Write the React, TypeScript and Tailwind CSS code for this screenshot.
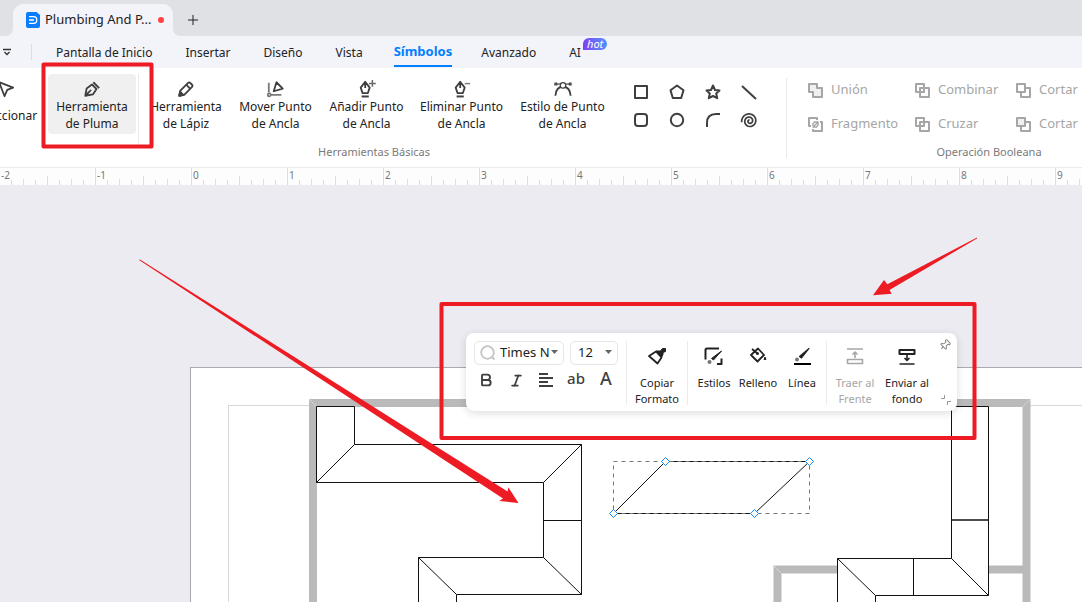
import type { ReactNode } from "react";
import { Bold, Italic, Pin, Plus } from "lucide-react";

interface Tool {
  label: string;
  width: string;
  icon: ReactNode;
  active?: boolean;
}

const menuItems = [
  "Pantalla de Inicio",
  "Insertar",
  "Diseño",
  "Vista",
  "Símbolos",
  "Avanzado",
];

const rulerUnits = Array.from({ length: 24 }, (_, i) => i - 2);

// Clockwise spiral winding inwards from the left
const spiralPoints = Array.from({ length: 49 }, (_, i) => {
  const angle = Math.PI * (0.95 + (i / 48) * 4.6);
  const radius = 8 * (1 - i / 52);
  return `${(10.5 + radius * Math.cos(angle)).toFixed(2)},${(11 + radius * Math.sin(angle)).toFixed(2)}`;
}).join(" ");

function Icon({ children, className = "size-5" }: { children: ReactNode; className?: string }) {
  return (
    <svg
      className={className}
      viewBox="0 0 20 20"
      fill="none"
      stroke="currentColor"
      strokeWidth={2}
      strokeLinejoin="round"
      aria-hidden="true"
    >
      {children}
    </svg>
  );
}

const tools: Tool[] = [
  {
    label: "Seleccionar",
    width: "w-[86px]",
    icon: <path d="M3.500 2.500L19 8.500L12.500 11L9.500 18Z" />,
  },
  {
    label: "Herramienta\nde Pluma",
    width: "w-[88px]",
    active: true,
    icon: (
      <>
        <path d="M2.500 17.500L4 9.500L10 5L15 10L11 16L2.500 17.500L8 12" />
        <path d="M11.500 2.500L18 9" />
        <circle cx="8.500" cy="11.500" r="1" fill="currentColor" stroke="none" />
      </>
    ),
  },
  {
    label: "Herramienta\nde Lápiz",
    width: "w-[88px]",
    icon: (
      <>
        <path d="M2.500 17.500L3.500 12L12 3.500Q13.500 2 15 3.500L16.500 5Q18 6.500 16.500 8L8 16.500Z" />
        <path d="M10.500 5.500L14.500 9.500" />
        <path d="M2.500 17.500L3.500 13L7 16.500Z" fill="currentColor" />
      </>
    ),
  },
  {
    label: "Mover Punto\nde Ancla",
    width: "w-[91px]",
    icon: (
      <>
        <path d="M2 3V14M4 16.500H16" stroke="#7a7a7a" />
        <circle cx="2.500" cy="16.500" r="1.700" stroke="#7a7a7a" />
        <path d="M10.500 2.500L17.500 9.500L7.500 12.500Z" />
      </>
    ),
  },
  {
    label: "Añadir Punto\nde Ancla",
    width: "w-[91px]",
    icon: (
      <>
        <path d="M8 2L3 8.500L5 14.500H11L13 8.500ZM8 3V9" />
        <path d="M4 18.300H12" strokeWidth="2.200" />
        <path d="M16 0V7.500M12.200 4H19.800" stroke="#6b6b6b" strokeWidth="1.700" />
      </>
    ),
  },
  {
    label: "Eliminar Punto\nde Ancla",
    width: "w-[99px]",
    icon: (
      <>
        <path d="M8 2L3 8.500L5 14.500H11L13 8.500ZM8 3V9" />
        <path d="M4 18.300H12" strokeWidth="2.200" />
        <path d="M13 4H19" stroke="#7f7f7f" strokeWidth="1.700" />
      </>
    ),
  },
  {
    label: "Estilo de Punto\nde Ancla",
    width: "w-[103px]",
    icon: (
      <>
        <path d="M1.500 17.500C2 11 5 7.500 10 7.500S18 11 18.500 17.500" />
        <path d="M3 4.500H17" strokeWidth="1.300" />
        <circle cx="10" cy="6" r="3" fill="white" strokeWidth="1.300" />
        <path d="M1 3.500H3V5.500H1ZM17 3.500H19V5.500H17Z" fill="white" strokeWidth="1.300" />
      </>
    ),
  },
];

const shapes = [
  { name: "Rectángulo", icon: <rect x="4" y="4" width="12" height="12" /> },
  { name: "Pentágono", icon: <path d="M10 3.500L16.500 8.300L14.200 16H5.800L3.500 8.300Z" /> },
  {
    name: "Estrella",
    icon: <path d="M10 3.500L12 8L16.500 8.500L13.200 11.500L14.200 16.200L10 14L5.800 16.200L6.800 11.500L3.500 8.500L8 8Z" />,
  },
  { name: "Recta", icon: <path d="M3 4L17 17" /> },
  { name: "Rectángulo redondeado", icon: <rect x="4" y="4" width="12" height="12" rx="3" /> },
  { name: "Elipse", icon: <circle cx="10" cy="10" r="6.200" /> },
  { name: "Arco", icon: <path d="M4 17V13Q4 4 13 4H17" /> },
  { name: "Espiral", icon: <polyline points={spiralPoints} strokeWidth="1.700" /> },
];

const booleanOps = [
  { label: "Unión", icon: <path d="M4 4H12V8H17V17H8V12H4Z" fill="#f0f0f0" /> },
  { label: "Combinar", icon: <path d="M4 4H12V12H4ZM8 8H17V17H8Z" /> },
  {
    label: "Cortar Forma",
    icon: (
      <>
        <path d="M4 4H12V12H4Z" />
        <path d="M12 8H17V17H8V12" />
      </>
    ),
  },
  {
    label: "Fragmento",
    icon: (
      <>
        <path d="M6 12H4V4H12V6M15 8H17V17H8V15" />
        <path d="M8 12V9.500L9.500 8H13V11L11.500 13H8L13 8" strokeWidth="1.400" />
      </>
    ),
  },
  { label: "Cruzar", icon: <path d="M4 4H12V12H4ZM8 8H17V17H8Z" /> },
  {
    label: "Cortar Fondo",
    icon: (
      <>
        <path d="M4 4H12V12H4Z" fill="#f0f0f0" />
        <path d="M12 8H17V17H8V12" />
      </>
    ),
  },
];

function TitleBar() {
  return (
    <header className="flex h-9 items-end bg-[#e0e1e5] pl-[13px] text-[13px]">
      <div className="relative flex h-8 w-40 items-center rounded-t-[10px] bg-[#f3f3fa] pl-[13px]">
        <svg className="absolute bottom-0 -left-2 size-2" viewBox="0 0 8 8" aria-hidden="true">
          <path d="M8 0V8H0Q8 8 8 0Z" fill="#f3f3fa" />
        </svg>
        <svg className="absolute -right-2 bottom-0 size-2" viewBox="0 0 8 8" aria-hidden="true">
          <path d="M0 0V8H8Q0 8 0 0Z" fill="#f3f3fa" />
        </svg>
        <svg className="h-4 w-3.5" viewBox="0 0 14 16" fill="none" aria-hidden="true">
          <path d="M2 0H10.500L14 3V14Q14 16 12 16H2Q0 16 0 14V2Q0 0 2 0Z" fill="#0b7cff" />
          <path d="M3 4.700H7.500A3.300 3.300 0 0 1 7.500 11.300H3M3 8H8" stroke="white" strokeWidth="1.300" />
        </svg>
        <span className="ml-[5px] w-[105px] whitespace-nowrap">Plumbing And P...</span>
        <span className="ml-2 size-1.5 rounded-full bg-[#ff4343]" />
      </div>
      <button className="mb-2 ml-3 text-[#222]" aria-label="Nueva pestaña">
        <Plus className="size-4" strokeWidth={1.5} />
      </button>
    </header>
  );
}

function MenuBar() {
  return (
    <nav className="flex h-8 items-center bg-[#f3f3fa]">
      <button className="flex w-[31px] pl-0.5" aria-label="Más opciones">
        <svg className="h-2 w-2.5" viewBox="0 0 10 8" fill="none" stroke="#333" aria-hidden="true">
          <path d="M1 1.500H9M2.500 4L5 6.500L7.500 4" strokeWidth="1.300" />
        </svg>
      </button>
      <span className="h-4 w-px bg-[#dcdde3]" />
      <ul className="ml-6 flex h-full gap-[33px]">
        {menuItems.map((item) => (
          <li key={item} className="flex">
            <a
              href="#"
              className={
                item === "Símbolos"
                  ? "-mr-1 -ml-0.5 mb-px flex items-center border-b-2 border-[#0080ff] pt-[3px] text-[13px] font-bold whitespace-nowrap text-[#0080ff]"
                  : "flex items-center pt-0.5 whitespace-nowrap"
              }
            >
              {item}
            </a>
          </li>
        ))}
        <li className="relative flex">
          <a href="#" className="flex items-center pt-0.5">
            AI
          </a>
          <span className="absolute top-0.5 left-3.5 flex h-3 w-6 items-center justify-center rounded-[6px] rounded-bl-none bg-linear-to-r from-[#7b3ff5] to-[#4a90ff] pb-px text-[11px] leading-3 text-white italic">
            hot
          </span>
        </li>
      </ul>
    </nav>
  );
}

function Ribbon() {
  return (
    <section className="flex h-[100px] overflow-hidden border-b border-[#ebebee] bg-white">
      <div className="-ml-[38px] flex w-[824px] shrink-0 flex-col pt-1.5">
        <div className="flex h-[68px]">
          {tools.map((tool) => (
            <div key={tool.label} className="flex shrink-0">
              <button
                className={`flex h-[60px] flex-col items-center rounded pt-1.5 leading-[17px] ${tool.width} ${
                  tool.active ? "bg-[#f0f0f0]" : ""
                }`}
              >
                <span className="h-[18px] text-[#3f3f3f]">
                  <Icon className="size-[18px]">{tool.icon}</Icon>
                </span>
                <span className="flex h-[34px] items-center justify-center whitespace-pre">{tool.label}</span>
              </button>
              {tool.active && <span className="mr-[3px] ml-0.5 h-[72px] w-px bg-[#ebebeb]" />}
            </div>
          ))}
          <div className="ml-[17px] grid grid-cols-4 gap-x-4 gap-y-2 self-start pt-2 text-[#3f3f3f]">
            {shapes.map((shape) => (
              <button key={shape.name} className="size-5" aria-label={shape.name}>
                <Icon>{shape.icon}</Icon>
              </button>
            ))}
          </div>
        </div>
        <p className="text-center text-[11px] leading-5 text-[#7a7a7a]">Herramientas Básicas</p>
      </div>
      <span className="mt-2.5 h-20 w-px shrink-0 bg-[#ebebeb]" />
      <div className="flex w-[404px] shrink-0 flex-col pt-1.5">
        <div className="grid h-[68px] grid-cols-[107px_101px_150px] content-start gap-y-3.5 pt-1.5 pl-[18px]">
          {booleanOps.map((op) => (
            <button key={op.label} className="flex h-5 items-center gap-1.5 text-[13px] whitespace-nowrap text-[#a6a6a6]">
              <Icon>{op.icon}</Icon>
              {op.label}
            </button>
          ))}
        </div>
        <p className="text-center text-[11px] leading-5 text-[#7a7a7a]">Operación Booleana</p>
      </div>
    </section>
  );
}

function Ruler() {
  return (
    <div className="-ml-px flex h-[17px] overflow-hidden bg-[#fdfdfd]">
      {rulerUnits.map((unit) => (
        <div key={unit} className="flex w-24 shrink-0 border-l border-[#dedede] text-[10px] leading-[15px] text-[#777]">
          <span className="w-0 pl-px">{unit}</span>
          <svg className="-ml-px h-[17px] w-[95px] shrink-0" stroke="#dedede" aria-hidden="true">
            <path d="M11.500 12V17M23.500 11V17M35.500 12V17M47.500 8V17M59.500 12V17M71.500 11V17M83.500 12V17" />
          </svg>
        </div>
      ))}
    </div>
  );
}

function Drawing() {
  const anchors = [
    [665.5, 276.5],
    [613.5, 328.5],
    [809.5, 276.5],
    [754.5, 328.5],
  ];
  return (
    <svg className="absolute inset-0 size-full" fill="none" aria-label="Plano de planta">
      <rect x="190.500" y="182.500" width="3000" height="3000" fill="white" stroke="#a9a9ae" />
      <rect x="228.500" y="220.500" width="2924" height="2924" stroke="#d9d9d9" />
      <path d="M313 900V218H1026.500V900M777.500 900V384.500H1026.500" stroke="#bababa" strokeWidth="8" />
      <path d="M309 214L317 222M1030.500 214L1022.500 222M773.500 380.500L781.500 388.500" stroke="#d5d5d5" />
      <g stroke="#111" fill="white">
        <path d="M316.500 221.500H354.500V259.500H581.500V409.500H456.500V900H418.500V372.500H543.500V297.500H316.500Z" />
        <path d="M354.500 259.500L316.500 297.500M581.500 259.500L543.500 297.500M543.500 335.500H581.500M543.500 372.500L581.500 409.500M418.500 372.500L456.500 409.500" />
        <path d="M951.500 221.500H988.500V410.500H875.500V900H837.500V373.500H951.500Z" />
        <path d="M951.500 335H988.500" strokeWidth="1.500" />
        <path d="M951.500 373.500L988.500 410.500M913.500 373.500V410.500M837.500 373.500L875.500 410.500" />
      </g>
      <path d="M613.500 328.500L665.500 276.500H809.500L754.500 328.500Z" stroke="#111" />
      <rect x="613.500" y="276.500" width="196" height="52" stroke="#777" strokeDasharray="4 4" />
      {anchors.map(([x, y], i) => (
        <path
          key={i}
          transform={`translate(${x} ${y})`}
          d="M0 -4L4 0L0 4L-4 0Z"
          fill="white"
          stroke="#1a8cff"
        />
      ))}
    </svg>
  );
}

function Caret() {
  return (
    <svg className="pointer-events-none absolute top-2 right-[5px] h-1 w-[7px]" viewBox="0 0 7 4" aria-hidden="true">
      <path d="M0 0H7L3.500 4Z" fill="#666" />
    </svg>
  );
}

function PanelButton({ label, icon, className }: { label: string; icon: ReactNode; className: string }) {
  return (
    <button className={`flex flex-col items-center text-[11px] leading-4 ${className}`}>
      <span className="flex h-[30px] items-center">
        <Icon>{icon}</Icon>
      </span>
      <span className="mt-1 whitespace-pre">{label}</span>
    </button>
  );
}

function FloatingToolbar() {
  return (
    <div className="absolute top-[148px] left-[466px] flex h-[78px] w-[491px] rounded-lg bg-white pt-2 pl-2 shadow-[0_2px_8px_rgba(0,0,0,0.14)]">
      <div className="w-[152px]">
        <div className="flex gap-1.5">
          <label className="relative flex h-6 w-[90px] items-center rounded-[5px] border border-[#e6e6e6] pl-1">
            <svg className="size-[18px] shrink-0" viewBox="0 0 18 18" fill="none" stroke="#c4c4c4" strokeWidth="1.800">
              <circle cx="8.500" cy="8.500" r="6.300" />
              <path d="M12.500 12.500L15.500 15.500" />
            </svg>
            <select className="ml-[3px] w-[49px] appearance-none overflow-hidden text-[13px] outline-none" aria-label="Fuente">
              <option>Times New Roman</option>
            </select>
            <Caret />
          </label>
          <label className="relative flex h-6 w-12 items-center rounded-[5px] border border-[#e6e6e6] pl-[7px]">
            <select className="w-6 appearance-none text-[13px] outline-none" aria-label="Tamaño de fuente">
              <option>12</option>
            </select>
            <Caret />
          </label>
        </div>
        <div className="-ml-[3px] grid w-[150px] grid-cols-5 pt-[3px] text-[#3f3f3f]">
          <button className="flex h-6 items-center justify-center" aria-label="Negrita">
            <Bold className="size-4" strokeWidth={2.8} />
          </button>
          <button className="flex h-6 items-center justify-center" aria-label="Cursiva">
            <Italic className="size-[15px]" strokeWidth={2.8} />
          </button>
          <button className="flex h-6 items-center justify-center" aria-label="Alinear">
            <svg className="size-3.5" stroke="currentColor" strokeWidth="2" aria-hidden="true">
              <path d="M0 1H9M0 5H14M0 9H9M0 13H14" />
            </svg>
          </button>
          <button className="h-6 pb-1 text-[15px] leading-5 font-medium">ab</button>
          <button className="h-6 pb-1 text-lg leading-5 font-medium">A</button>
        </div>
      </div>
      <span className="h-16 w-px bg-[#ebebeb]" />
      <PanelButton
        label={"Copiar\nFormato"}
        className="w-[60px]"
        icon={
          <>
            <path d="M2 10L9 5.500L14.500 11.500L10.500 17.500Z" strokeWidth="1.800" />
            <path d="M9 5L14.500 11.500L16 8.500V6.500L18.500 5.500V2.500H15.500L13.500 5Z" fill="currentColor" strokeWidth="1" />
          </>
        }
      />
      <span className="h-16 w-px bg-[#ebebeb]" />
      <div className="flex w-[138px] pl-1">
        <PanelButton
          label="Estilos"
          className="w-11"
          icon={
            <>
              <path d="M1.500 13.500V4Q1.500 2.500 3 2.500H15M13 18H17.500V12.500" />
              <path d="M17.500 5L9.500 14L7.500 12.500Z" fill="currentColor" strokeWidth="1" />
              <circle cx="5.500" cy="16" r="2" fill="#777" stroke="none" />
            </>
          }
        />
        <PanelButton
          label="Relleno"
          className="w-11"
          icon={
            <>
              <path d="M3 9L10 2.500L16 9L9.500 15.500Z" strokeWidth="1.800" />
              <path d="M4 3L9.500 7.500" strokeWidth="1.800" />
              <circle cx="9.500" cy="7.500" r="1.500" fill="currentColor" stroke="none" />
              <path d="M17 11L18 13.500H16Z" fill="currentColor" strokeWidth="1" />
            </>
          }
        />
        <PanelButton
          label="Línea"
          className="w-11"
          icon={
            <>
              <path d="M17 2.500L9.500 12L7.500 10.500Z" fill="currentColor" strokeWidth="1.200" />
              <circle cx="5" cy="13.500" r="2" fill="#777" stroke="none" />
              <path d="M2 18H19" stroke="black" />
            </>
          }
        />
      </div>
      <span className="h-16 w-px bg-[#ebebeb]" />
      <div className="flex pl-0.5">
        <PanelButton
          label={"Traer al\nFrente"}
          className="w-[52px] text-[#a6a6a6]"
          icon={
            <path d="M2 3H18M2.500 13.500H17.500V17.500H2.500ZM10 12V6.500M7.500 8.500L10 6L12.500 8.500" strokeWidth="1.600" />
          }
        />
        <PanelButton
          label={"Enviar al\nfondo"}
          className="w-[52px]"
          icon={
            <>
              <path d="M2.500 4H17.500V8H2.500Z" />
              <path d="M10 8V14M7.500 12L10 14.500L12.500 12M2.500 18H17.500" strokeWidth="1.600" />
            </>
          }
        />
      </div>
      <button className="absolute top-1.5 right-1.5 text-[#8a8a8a]" aria-label="Fijar">
        <Pin className="size-3 rotate-45" strokeWidth={2} />
      </button>
      <button className="absolute right-1.5 bottom-1.5 text-[#999]" aria-label="Contraer">
        <svg className="size-[11px]" viewBox="0 0 11 11" fill="none" stroke="currentColor" aria-hidden="true">
          <path d="M1 4.500H4.500V1M7.500 11V7.500H11" />
        </svg>
      </button>
    </div>
  );
}

// Red boxes and arrows drawn over the whole window
function Annotations() {
  return (
    <svg className="pointer-events-none absolute inset-0 size-full" aria-hidden="true">
      <g fill="none" stroke="#ed1c24" strokeWidth="4" strokeLinejoin="round">
        <rect x="43.500" y="64.500" width="108" height="82" />
        <rect x="441.500" y="304" width="533" height="134" />
      </g>
      <g fill="#ed1c24">
        <path d="M139 260L140 259.500L507.600 491.400L508.300 487.300L518.500 503L499.300 501L503 498.400Z" />
        <path d="M977 237.500L887.300 284.300L884 280L873 295.200L891.700 293.700L889.500 290L977 238.500Z" />
      </g>
    </svg>
  );
}

export default function App() {
  return (
    <div className="relative flex min-h-screen flex-col overflow-hidden bg-[#ebebf1] font-['Noto_Sans',sans-serif] text-xs text-[#222]">
      <TitleBar />
      <MenuBar />
      <Ribbon />
      <Ruler />
      <main className="relative flex-1">
        <Drawing />
        <FloatingToolbar />
      </main>
      <Annotations />
    </div>
  );
}
